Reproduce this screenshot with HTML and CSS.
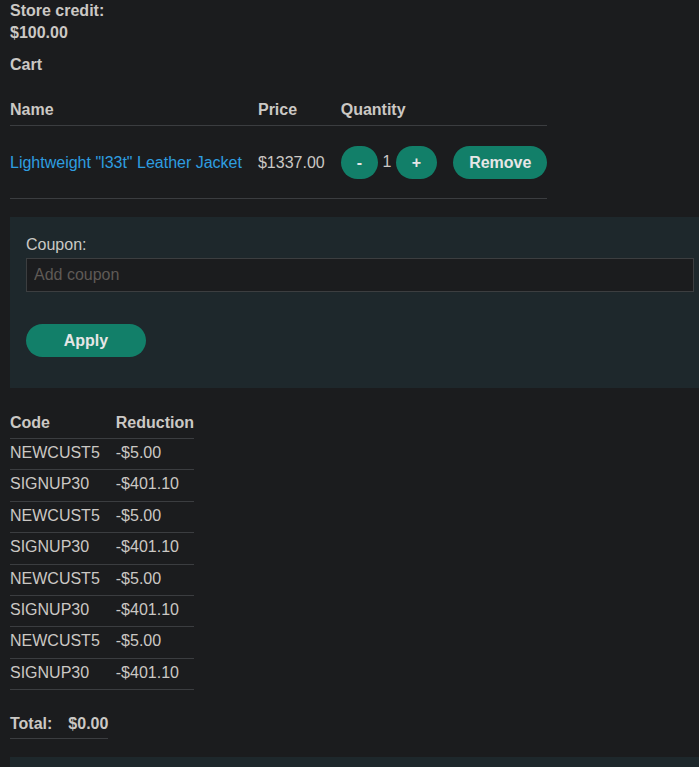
FILE: index.html
```html
<!DOCTYPE html>
<html lang="en">
<head>
<meta charset="utf-8">
<title>Cart</title>
<link rel="stylesheet" href="styles.css">
</head>
<body>
<div class="page">
  <p class="credit"><strong>Store credit:<br>$100.00</strong></p>
  <p class="cart-title"><strong>Cart</strong></p>
  <table class="cart">
    <thead>
      <tr><th>Name</th><th>Price</th><th>Quantity</th><th></th></tr>
    </thead>
    <tbody>
      <tr>
        <td><a href="#">Lightweight "l33t" Leather Jacket</a></td>
        <td>$1337.00</td>
        <td><button class="btn">-</button> 1 <button class="btn">+</button></td>
        <td><button class="btn">Remove</button></td>
      </tr>
    </tbody>
  </table>
  <form class="panel coupon">
    <label class="coupon-label" for="coupon">Coupon:</label>
    <input id="coupon" class="coupon-input" type="text" placeholder="Add coupon">
    <button class="btn btn-apply" type="button">Apply</button>
  </form>
  <table class="codes">
    <thead><tr><th>Code</th><th>Reduction</th></tr></thead>
    <tbody>
      <tr><td>NEWCUST5</td><td>-$5.00</td></tr>
      <tr><td>SIGNUP30</td><td>-$401.10</td></tr>
      <tr><td>NEWCUST5</td><td>-$5.00</td></tr>
      <tr><td>SIGNUP30</td><td>-$401.10</td></tr>
      <tr><td>NEWCUST5</td><td>-$5.00</td></tr>
      <tr><td>SIGNUP30</td><td>-$401.10</td></tr>
      <tr><td>NEWCUST5</td><td>-$5.00</td></tr>
      <tr><td>SIGNUP30</td><td>-$401.10</td></tr>
    </tbody>
  </table>
  <table class="total">
    <tbody><tr><th>Total:</th><th>$0.00</th></tr></tbody>
  </table>
  <div class="panel bottom-panel"></div>
</div>
</body>
</html>
```

FILE: styles.css
```css
html, body {
  margin: 0;
  padding: 0;
  background: #1b1c1e;
  overflow: hidden;
}
body {
  font-family: "Liberation Sans", Arial, sans-serif;
  font-size: 16px;
  color: #cbc8c4;
}
.page {
  padding: 0 0 0 10px;
}
.credit {
  margin: 0;
  line-height: 22px;
}
.cart-title {
  margin: 12px 0 0;
  line-height: 18px;
}
table {
  border-collapse: collapse;
}
th {
  text-align: left;
  font-weight: bold;
}
.cart {
  margin-top: 27px;
}
.cart th {
  padding: 0 16px 6px 0;
  border-bottom: 1px solid #3b3d40;
  line-height: 18px;
}
.cart td {
  padding: 20px 16px 19px 0;
  border-bottom: 1px solid #3b3d40;
  vertical-align: middle;
  line-height: 18px;
  white-space: nowrap;
}
.cart th:last-child,
.cart td:last-child,
.codes th:last-child,
.codes td:last-child {
  padding-right: 0;
}
a {
  color: #2e9ee0;
  text-decoration: none;
}
.btn {
  font-family: "Liberation Sans", Arial, sans-serif;
  font-size: 16px;
  font-weight: bold;
  color: #e6e6e6;
  background: #127f69;
  border: 0;
  border-radius: 17px;
  height: 33px;
  padding: 0 16px;
  vertical-align: middle;
  cursor: pointer;
}
.panel {
  background: #1e282c;
  width: 720px;
}
.coupon {
  margin: 18px 0 0;
  padding: 19px 16px 31px;
  box-sizing: border-box;
  height: 171px;
  display: flex;
  flex-direction: column;
  align-items: flex-start;
}
.coupon-label {
  line-height: 18px;
  margin-bottom: 4px;
}
.coupon-input {
  box-sizing: border-box;
  width: 668px;
  height: 34px;
  background: #1b1c1e;
  border: 1px solid #3c3e40;
  padding: 0 7px;
  font-family: "Liberation Sans", Arial, sans-serif;
  font-size: 16px;
  color: #cbc8c4;
  outline: none;
}
.coupon-input::placeholder {
  color: #5f5a56;
}
.btn-apply {
  margin-top: 32px;
  min-width: 120px;
}
.codes {
  margin-top: 26px;
}
.codes th {
  padding: 0 16px 6px 0;
  line-height: 18px;
  border-bottom: 1px solid #3b3d40;
}
.codes td {
  padding: 5px 16px 7px 0;
  line-height: 18.4px;
  border-bottom: 1px solid #3b3d40;
}
.total {
  margin-top: 25px;
}
.total th {
  padding: 0 16px 5px 0;
  line-height: 18px;
  border-bottom: 1px solid #3b3d40;
}
.total th:last-child {
  padding-right: 0;
}
.bottom-panel {
  margin-top: 18px;
  height: 40px;
}
```
